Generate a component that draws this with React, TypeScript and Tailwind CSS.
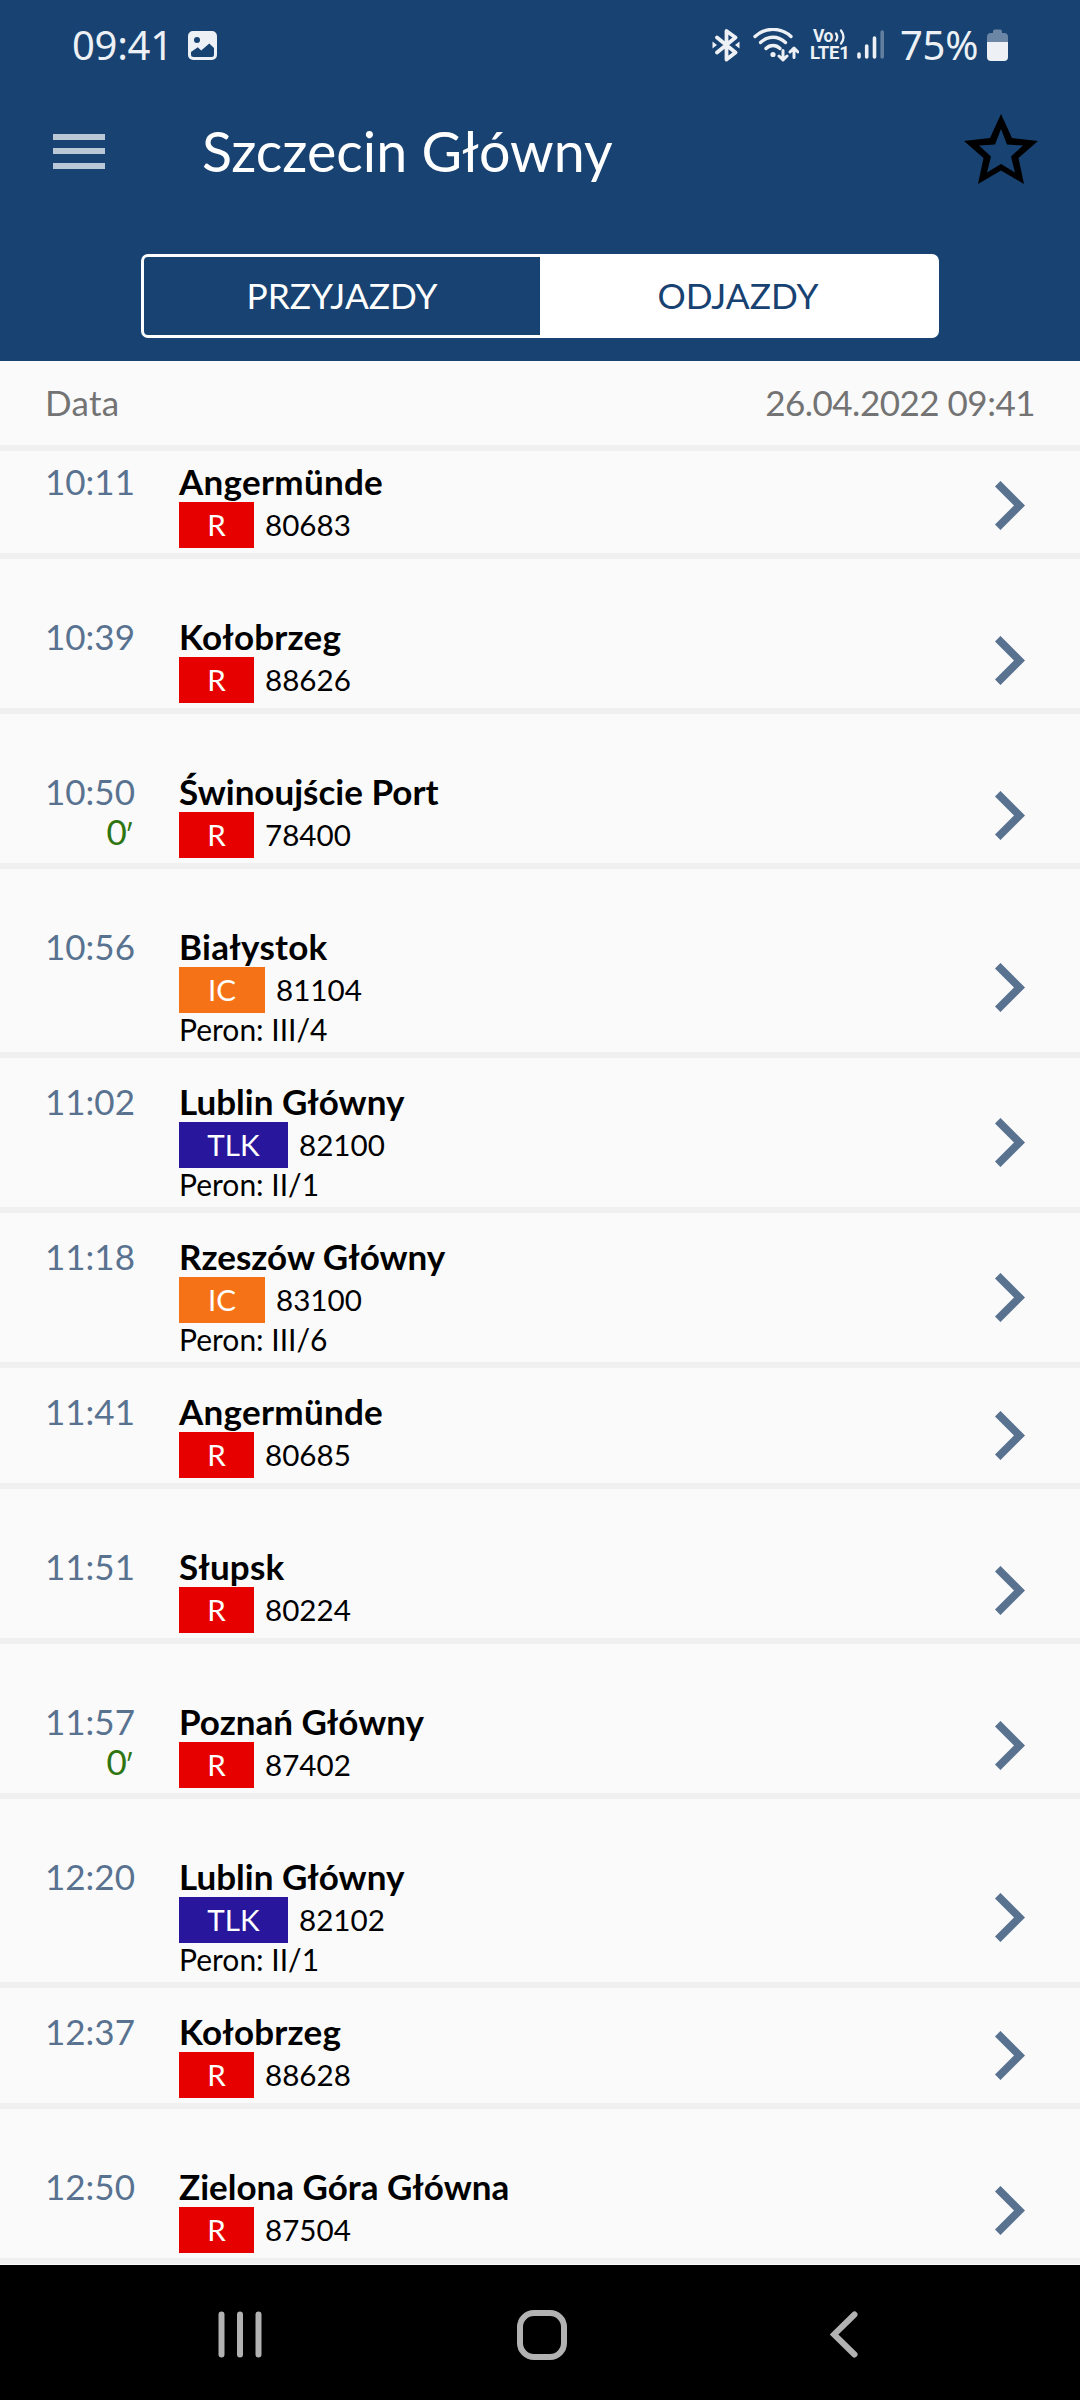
type Kind = "R" | "IC" | "TLK";

interface Departure {
  time: string;
  delay?: string;
  city: string;
  tracking?: string;
  kind: Kind;
  number: string;
  platform?: string;
}

const departures: Departure[] = [
  { time: "10:11", city: "Angermünde", tracking: "tracking-[0.28px]", kind: "R", number: "80683" },
  { time: "10:39", city: "Kołobrzeg", tracking: "tracking-[0.2px]", kind: "R", number: "88626" },
  { time: "10:50", delay: "0", city: "Świnoujście Port", kind: "R", number: "78400" },
  { time: "10:56", city: "Białystok", tracking: "tracking-[0.28px]", kind: "IC", number: "81104", platform: "III/4" },
  { time: "11:02", city: "Lublin Główny", kind: "TLK", number: "82100", platform: "II/1" },
  { time: "11:18", city: "Rzeszów Główny", kind: "IC", number: "83100", platform: "III/6" },
  { time: "11:41", city: "Angermünde", tracking: "tracking-[0.28px]", kind: "R", number: "80685" },
  { time: "11:51", city: "Słupsk", tracking: "tracking-[0.2px]", kind: "R", number: "80224" },
  { time: "11:57", delay: "0", city: "Poznań Główny", kind: "R", number: "87402" },
  { time: "12:20", city: "Lublin Główny", kind: "TLK", number: "82102", platform: "II/1" },
  { time: "12:37", city: "Kołobrzeg", tracking: "tracking-[0.2px]", kind: "R", number: "88628" },
  { time: "12:50", city: "Zielona Góra Główna", kind: "R", number: "87504" },
];

const badgeStyles: Record<Kind, string> = {
  R: "w-[75px] bg-[#e60000]",
  IC: "w-[86px] bg-[#f57316]",
  TLK: "w-[109px] bg-[#28179c]",
};

function StatusBar() {
  return (
    <div className="flex h-[90px] items-center pl-[72px] pr-[72px] text-[#edf1f5]">
      <span className="w-[116px] font-['Noto_Sans'] text-[40px] leading-[88px] tracking-[-0.3px]">09:41</span>
      <svg className="mt-[1px] h-[29px] w-[29px]" viewBox="0 0 29 29">
        <path
          fill="currentColor"
          fillRule="evenodd"
          d="M5 0H24a5 5 0 0 1 5 5V24a5 5 0 0 1-5 5H5a5 5 0 0 1-5-5V5a5 5 0 0 1 5-5ZM3 21V23.5a2.5 2.5 0 0 0 2.500 2.500H23.500a2.500 2.500 0 0 0 2.500-2.500V17L21.300 12.500L13.200 19.500L9.800 16.200ZM9 6a3 3 0 1 0 0 6a3 3 0 0 0 0-6Z"
        />
      </svg>
      <svg className="ml-auto h-[34px] w-[28px]" viewBox="0 0 28 34" fill="none" stroke="currentColor" strokeWidth="3.800" strokeLinejoin="round" strokeLinecap="round">
        <path d="M5 9.500L23.500 24.500L14.500 31.500V3L23.500 9.500L5 24.500" />
        <path d="M0.500 13.500V20.500L5 17ZM27.500 13.500V20.500L23 17Z" fill="currentColor" stroke="none" />
      </svg>
      <svg className="ml-[13px] h-[34px] w-[46px]" viewBox="0 0 46 34" fill="none" stroke="currentColor" strokeWidth="3.300" strokeLinecap="round" strokeLinejoin="round">
        <path d="M2 8.500C12 -1 28 -1 38 8.500M7.500 14.500C15 7.500 25 7.500 32.500 14.500M13 20.500C17 16.500 23 16.500 27 20.500" />
        <circle cx="20" cy="26.500" r="2.600" fill="currentColor" stroke="none" />
        <path d="M30 22.500V31.500M26 28L30 32L34 28M41 29.500V20.500M37 24L41 20L45 24" strokeWidth="3" />
      </svg>
      <div className="ml-[11px] flex w-[40px] flex-col font-['Roboto'] font-bold leading-[17px]">
        <span className="flex h-[17px] items-center pl-[3px] text-[17.500px] tracking-[-0.5px]">
          Vo
          <svg className="ml-[1px] h-[16px] w-[12px]" viewBox="0 0 12 16" fill="none" stroke="currentColor" strokeWidth="2.300" strokeLinecap="round">
            <path d="M2 4.500Q4.500 8 2 11.500M7 1.500Q12 8 7 14.500" />
          </svg>
        </span>
        <span className="whitespace-nowrap text-[18.500px] tracking-[-0.2px]">LTE1</span>
      </div>
      <svg className="ml-[7px] h-[30px] w-[28px]" viewBox="0 0 28 30" stroke="currentColor" strokeWidth="3.600" strokeLinecap="round">
        <path d="M2 24V27M9.700 16V27M17.500 8V27" />
        <path d="M25.200 2V27" opacity="0.35" />
      </svg>
      <span className="ml-[15px] w-[87px] font-['Noto_Sans'] text-[40px] leading-[88px] tracking-[-0.3px]">75%</span>
      <svg className="h-[32px] w-[21px]" viewBox="0 0 21 32" fill="currentColor">
        <path d="M6 2.500A2 2 0 0 1 8 0.500H13A2 2 0 0 1 15 2.500V4H17A4 4 0 0 1 21 8V13H0V8A4 4 0 0 1 4 4H6Z" opacity="0.4" />
        <path d="M0 13H21V28A4 4 0 0 1 17 32H4A4 4 0 0 1 0 28Z" />
      </svg>
    </div>
  );
}

function TitleBar() {
  return (
    <div className="flex h-[124px] items-center pl-[53px] pr-[42px]">
      <div className="mb-[2px] flex w-[52px] flex-col gap-[8.500px]">
        <span className="h-[6px] bg-[#b9c7d6]" />
        <span className="h-[6px] bg-[#b9c7d6]" />
        <span className="h-[6px] bg-[#b9c7d6]" />
      </div>
      <h1 className="mb-[3px] ml-[97px] whitespace-nowrap text-[55.600px] leading-[121px] text-white">Szczecin Główny</h1>
      <svg className="mb-[6px] ml-auto h-[70px] w-[74px]" viewBox="0 0 74 70">
        <path
          fillRule="evenodd"
          d="M37 0L48 24L74 27L54.500 44L60 70L37 56.500L14 70L19.500 44L0 27L26 24ZM37 15L31 30.500L15 31.500L27 42.500L23 58.500L37 50L51 58.500L47 42.500L59 31.500L43 30.500Z"
        />
      </svg>
    </div>
  );
}

function Tabs() {
  return (
    <div className="mx-auto mt-10 grid h-[84px] w-[798px] grid-cols-2 overflow-hidden rounded-[7px] border-[3px] border-white bg-white text-center text-[35.300px] leading-[76px]">
      <button className="bg-[#174271] pb-[1px] text-white">PRZYJAZDY</button>
      <button className="bg-white pb-[1px] text-[#174271]">ODJAZDY</button>
    </div>
  );
}

function Row({ item }: { item: Departure }) {
  return (
    <li className="h-[155px] shrink-0">
      <div className="flex border-b-[6px] border-[#f0f0f0] pb-[5px] pl-[45px] pr-[55px]">
        <div className="mt-[10px] flex w-[89px] flex-col text-right text-[35px] leading-[40px] text-[#587290]">
          <span>{item.time}</span>
          {item.delay && (
            <span className="text-[#2f7512]">
              {item.delay}
              <span className="-ml-[2px] text-[28px]">′</span>
            </span>
          )}
        </div>
        <div className="ml-[45px] flex flex-1 flex-col text-black">
          <span className={"mt-[10px] h-[41px] text-[35px] font-bold leading-[41px] " + (item.tracking ?? "")}>{item.city}</span>
          <div className="flex h-[46px] text-[29.600px] leading-[45px]">
            <span className={"text-center text-white " + badgeStyles[item.kind]}>{item.kind}</span>
            <span className="ml-[11px]">{item.number}</span>
          </div>
          {item.platform && <span className="h-[34px] text-[30px] leading-[33px]">Peron: {item.platform}</span>}
        </div>
        <svg className="mt-[11px] h-[49px] w-[30px] self-center" viewBox="0 0 30 49" fill="none" stroke="#587290" strokeWidth="7.800">
          <path d="M2.700 2.700L24.500 24.500L2.700 46.300" />
        </svg>
      </div>
    </li>
  );
}

function NavBar() {
  return (
    <nav className="flex h-[135px] items-center bg-black pl-[218px] pr-[222px] text-[#b2b2b2]">
      <svg className="mt-1 h-[47px] w-[45px]" viewBox="0 0 45 47" stroke="currentColor" strokeWidth="6" strokeLinecap="round">
        <path d="M3.500 3.500V43.500M22 3.500V43.500M40.500 3.500V43.500" />
      </svg>
      <div className="ml-[254px] mt-1 h-[50px] w-[50px] rounded-[17px] border-[6px] border-[#b2b2b2]" />
      <svg className="ml-auto mt-1 h-[47px] w-[28px]" viewBox="0 0 28 47" fill="none" stroke="currentColor" strokeWidth="6" strokeLinecap="round">
        <path d="M24.500 3.500L4 23.500L24.500 43.500" />
      </svg>
    </nav>
  );
}

export default function App() {
  return (
    <div className="flex h-[2400px] w-[1080px] flex-col overflow-hidden bg-[#fafafa] font-['Lato',sans-serif]">
      <header className="h-[361px] shrink-0 bg-[#174271]">
        <StatusBar />
        <TitleBar />
        <Tabs />
      </header>
      <div className="flex h-[90px] shrink-0 justify-between border-b-[6px] border-[#f0f0f0] px-[45px] text-[35px] leading-[83px] text-[#737373]">
        <span className="tracking-[0.3px]">Data</span>
        <span className="tracking-[-0.5px]">26.04.2022 09:41</span>
      </div>
      <ul className="flex min-h-0 flex-1 flex-col overflow-hidden">
        {departures.map((item) => (
          <Row key={item.time} item={item} />
        ))}
      </ul>
      <NavBar />
    </div>
  );
}
